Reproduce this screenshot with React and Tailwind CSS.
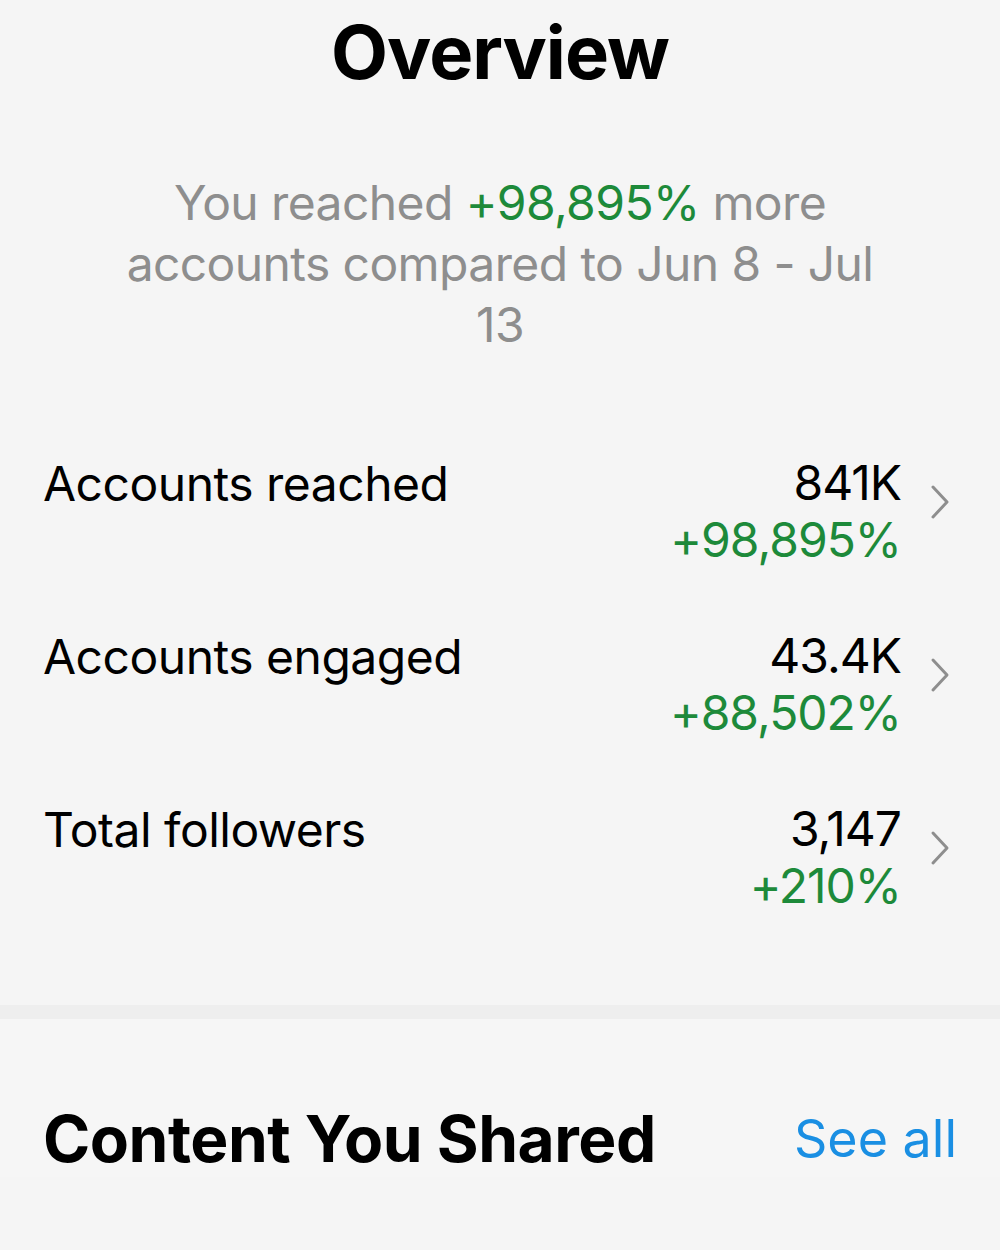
import React from "react";

function Chevron() {
  return (
    <svg width="22" height="36" viewBox="0 0 22 36" fill="none" className="shrink-0">
      <path d="M4 3 L18 18 L4 33" stroke="#8e8e8e" strokeWidth="3" strokeLinecap="round" strokeLinejoin="round" />
    </svg>
  );
}

function Row({ label, value, change }) {
  return (
    <div className="flex items-start h-[173px]">
      <div className="flex-1 text-[48px] leading-[60px] text-black tracking-[-0.5px]">{label}</div>
      <div className="flex flex-col items-end text-[48px] leading-[57px] tracking-[-1px]">
        <span className="text-black">{value}</span>
        <span className="text-[#1d8a3a]">{change}</span>
      </div>
      <div className="ml-[28px] mt-[30px]">
        <Chevron />
      </div>
    </div>
  );
}

export default function App() {
  return (
    <div className="w-[1000px] h-[1250px] bg-[#f5f5f5] overflow-hidden" style={{ fontFamily: "Inter, 'Noto Sans', sans-serif" }}>
      <div className="pt-[7px] text-center text-[74px] leading-[90px] font-bold text-black tracking-[-1px]">Overview</div>
      <p className="mt-[75px] mx-auto w-[800px] text-center text-[48px] leading-[61px] text-[#8e8e8e] tracking-[-0.6px]">
        You reached <span className="text-[#1d8a3a]">+98,895%</span> more accounts compared to Jun 8 - Jul 13
      </p>
      <div className="mt-[99px] pl-[43px] pr-[49px]">
        <Row label="Accounts reached" value="841K" change="+98,895%" />
        <Row label="Accounts engaged" value="43.4K" change="+88,502%" />
        <Row label="Total followers" value="3,147" change="+210%" />
      </div>
      <div className="mt-[32px] h-[14px] bg-[#eeeeee]" />
      <div className="bg-[#f6f6f6] flex items-center justify-between pl-[43px] pr-[43px] pt-[82px]">
        <div className="text-[64px] leading-[76px] font-bold text-black tracking-[-0.5px]">Content You Shared</div>
        <div className="text-[52px] leading-[76px] text-[#1a8fe3]">See all</div>
      </div>
    </div>
  );
}
